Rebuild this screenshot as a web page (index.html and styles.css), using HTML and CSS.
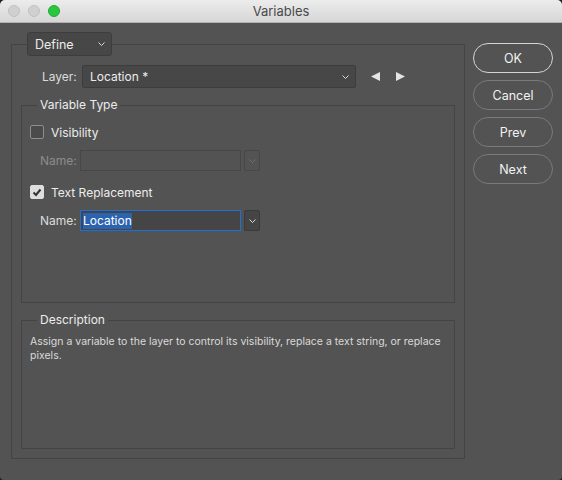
FILE: index.html
```html
<!DOCTYPE html>
<html>

<head>
    <link rel="stylesheet" href="styles.css">
</head>

<body>
    <div class="window">
        <div class="titlebar">
            <div class="lights">
                <span class="light"></span>
                <span class="light"></span>
                <span class="light green"></span>
            </div>
            <div class="title">Variables</div>
            <div></div>
        </div>

        <div class="content">
            <fieldset class="group outer">
                <legend class="define-legend">
                    <div class="dropdown define">
                        <span>Define</span>
                        <svg class="chevron" width="7" height="4" viewBox="0 0 7 4"><polyline points="0.5,0.5 3.5,3.5 6.5,0.5" /></svg>
                    </div>
                </legend>

                <div class="layer-row">
                    <label class="field-label">Layer:</label>
                    <div class="dropdown layer-select">
                        <span>Location *</span>
                        <svg class="chevron" width="7" height="4" viewBox="0 0 7 4"><polyline points="0.5,0.5 3.5,3.5 6.5,0.5" /></svg>
                    </div>
                    <div class="arrows">
                        <svg width="9" height="9" viewBox="0 0 9 9"><polygon points="9,0 9,9 0,4.5" /></svg>
                        <svg width="9" height="9" viewBox="0 0 9 9"><polygon points="0,0 0,9 9,4.5" /></svg>
                    </div>
                </div>

                <fieldset class="group inner">
                    <legend>Variable Type</legend>
                    <div class="vartype-body">
                        <div class="check-row">
                            <span class="checkbox"></span>
                            <span>Visibility</span>
                        </div>
                        <div class="name-row disabled">
                            <label class="name-label">Name:</label>
                            <div class="text-input"></div>
                            <div class="combo-btn">
                                <svg class="chevron" width="7" height="4" viewBox="0 0 7 4"><polyline points="0.5,0.5 3.5,3.5 6.5,0.5" /></svg>
                            </div>
                        </div>
                        <div class="check-row second">
                            <span class="checkbox checked">
                                <svg width="10" height="9" viewBox="0 0 10 9"><polyline points="1.5,4.5 4,7 8.5,1.5" /></svg>
                            </span>
                            <span>Text Replacement</span>
                        </div>
                        <div class="name-row">
                            <label class="name-label">Name:</label>
                            <div class="text-input focused"><span class="selected">Location</span></div>
                            <div class="combo-btn">
                                <svg class="chevron" width="7" height="4" viewBox="0 0 7 4"><polyline points="0.5,0.5 3.5,3.5 6.5,0.5" /></svg>
                            </div>
                        </div>
                    </div>
                </fieldset>

                <fieldset class="group inner desc">
                    <legend>Description</legend>
                    <div class="desc-body">
                        <p>Assign a variable to the layer to control its visibility, replace a text string, or replace pixels.</p>
                    </div>
                </fieldset>
            </fieldset>

            <div class="buttons">
                <button class="btn default">OK</button>
                <button class="btn">Cancel</button>
                <button class="btn">Prev</button>
                <button class="btn">Next</button>
            </div>
        </div>
    </div>
</body>

</html>
```

FILE: styles.css
```css
html {
    background-color: #1e1e1e;
}

body {
    margin: 0;
    font-family: Inter, "Liberation Sans", sans-serif;
    font-size: 12px;
    color: #ececec;
}

.window {
    width: 562px;
    height: 480px;
    background-color: #535353;
    border-radius: 5px 5px 4px 4px;
    overflow: hidden;
}

.titlebar {
    height: 22px;
    border-bottom: 1px solid #b1b1b1;
    background: linear-gradient(#ececec, #d6d6d6);
    display: grid;
    grid-template-columns: 1fr auto 1fr;
    align-items: center;
}

.lights {
    display: flex;
    gap: 8px;
    padding-left: 8px;
}

.light {
    width: 12px;
    height: 12px;
    box-sizing: border-box;
    border-radius: 50%;
    background-color: #d0d0d0;
    border: 1px solid #c0c0c0;
}

.light.green {
    background-color: #29c73f;
    border-color: #1fad2e;
}

.title {
    font-size: 13px;
    color: #4a4a4a;
}

.content {
    display: flex;
    padding-left: 11px;
}

.group {
    margin: 0;
    border: 1px solid #444;
    box-sizing: border-box;
    min-width: 0;
}

.outer {
    width: 454px;
    margin-top: 9px;
    padding: 0 9px 9px;
}

.define-legend {
    padding: 0;
    margin-left: 6px;
}

.dropdown {
    display: flex;
    align-items: center;
    justify-content: space-between;
    box-sizing: border-box;
    height: 24px;
    background-color: #474747;
    border: 1px solid #3d3d3d;
    border-radius: 3px;
    padding: 0 6px 0 7px;
}

.define {
    width: 85px;
    font-size: 12.5px;
}

.chevron {
    fill: none;
    stroke: #d8d8d8;
    stroke-width: 1;
}

.layer-row {
    display: flex;
    align-items: center;
    margin-top: 9px;
    padding-left: 21px;
}

.field-label {
    width: 33px;
    text-align: right;
    margin-right: 7px;
    color: #dcdcdc;
}

.layer-select {
    width: 274px;
    height: 23px;
    border-radius: 2px;
}

.arrows {
    display: flex;
    gap: 16px;
    margin-left: 15px;
}

.arrows svg {
    fill: #e4e4e4;
}

.inner {
    margin-top: 10px;
    padding: 0 8px;
}

.inner legend {
    margin-left: 7px;
    padding: 0 3px;
    line-height: 14px;
}

.vartype-body {
    height: 190px;
    padding-top: 13px;
    box-sizing: border-box;
}

.check-row {
    display: flex;
    align-items: center;
    gap: 7px;
    height: 14px;
}

.check-row.second {
    margin-top: 14px;
}

.checkbox {
    width: 14px;
    height: 14px;
    box-sizing: border-box;
    border: 1px solid #8e8e8e;
    border-radius: 2px;
    background-color: #4b4b4b;
    display: flex;
    align-items: center;
    justify-content: center;
}

.checkbox.checked {
    background-color: #dedede;
    border-color: #dedede;
}

.checkbox svg {
    fill: none;
    stroke: #333;
    stroke-width: 2;
}

.name-row {
    display: flex;
    align-items: center;
    margin-top: 11px;
    padding-left: 10px;
}

.name-label {
    width: 36px;
    margin-right: 4px;
    color: #dcdcdc;
}

.text-input {
    width: 161px;
    height: 21px;
    box-sizing: border-box;
    background-color: #454545;
    border: 1px solid #3a3a3a;
    display: flex;
    align-items: center;
    padding-left: 2px;
}

.text-input.focused {
    border-color: #1f6fd9;
}

.selected {
    background-color: #2a63b0;
    color: #fff;
    line-height: 16px;
}

.combo-btn {
    width: 16px;
    height: 21px;
    box-sizing: border-box;
    margin-left: 3px;
    background-color: #454545;
    border: 1px solid #3a3a3a;
    border-radius: 2px;
    display: flex;
    align-items: center;
    justify-content: center;
}

.disabled .name-label {
    color: #8c8c8c;
}

.disabled .text-input,
.disabled .combo-btn {
    background-color: #535353;
    border-color: #474747;
}

.disabled .chevron {
    stroke: #6e6e6e;
}

.desc {
    margin-top: 10px;
}

.desc-body {
    height: 121px;
    padding-top: 8px;
    box-sizing: border-box;
}

.desc-body p {
    margin: 0;
    font-size: 10.5px;
    line-height: 14px;
    color: #dadada;
}

.buttons {
    display: flex;
    flex-direction: column;
    gap: 7px;
    margin-top: 20px;
    margin-left: 8px;
}

.btn {
    width: 80px;
    height: 30px;
    border-radius: 15px;
    border: 1px solid #7a7a7a;
    background-color: transparent;
    color: #f2f2f2;
    font-family: Inter, "Liberation Sans", sans-serif;
    font-size: 12.5px;
    font-weight: 400;
    padding: 0;
}

.btn.default {
    border-color: #d4d4d4;
}
```
